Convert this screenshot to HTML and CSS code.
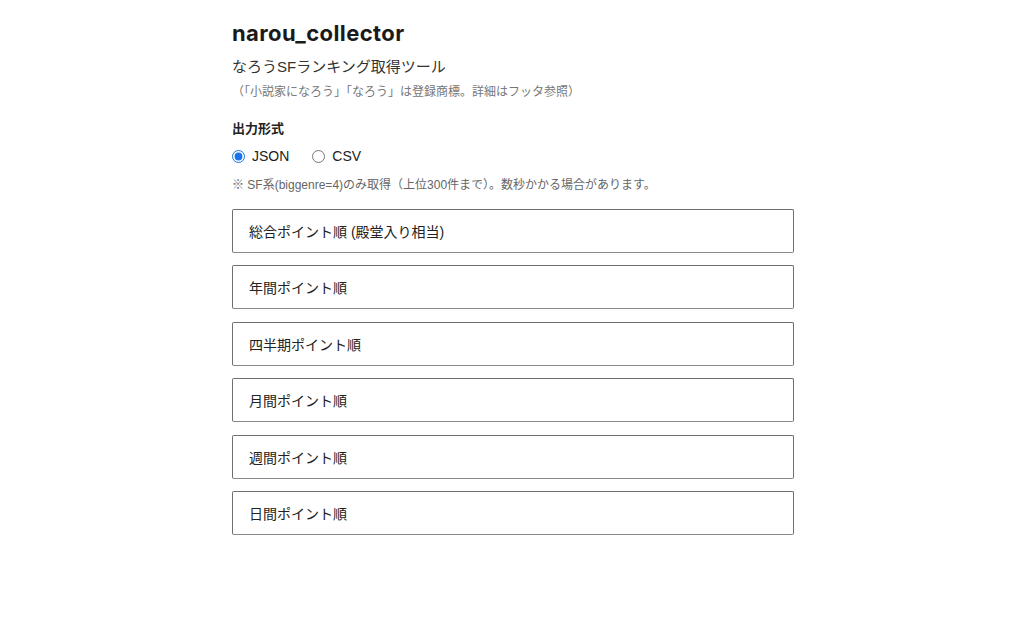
FILE: index.html
```html
<!DOCTYPE html>
<html lang="ja">
<head>
<meta charset="utf-8">
<title>narou_collector</title>
<link rel="stylesheet" href="styles.css">
</head>
<body>
<main class="container">
  <h1 class="title">narou_collector</h1>
  <p class="subtitle">なろうSFランキング取得ツール</p>
  <p class="trademark">（「小説家になろう」「なろう」は登録商標。詳細はフッタ参照）</p>

  <section class="format">
    <div class="format-label">出力形式</div>
    <div class="radios">
      <label class="radio"><input type="radio" name="fmt" checked> JSON</label>
      <label class="radio"><input type="radio" name="fmt"> CSV</label>
    </div>
  </section>

  <p class="note">※ SF系(biggenre=4)のみ取得（上位300件まで）。数秒かかる場合があります。</p>

  <div class="buttons">
    <button class="rank-btn">総合ポイント順 (殿堂入り相当)</button>
    <button class="rank-btn">年間ポイント順</button>
    <button class="rank-btn">四半期ポイント順</button>
    <button class="rank-btn">月間ポイント順</button>
    <button class="rank-btn">週間ポイント順</button>
    <button class="rank-btn">日間ポイント順</button>
  </div>
</main>
</body>
</html>
```

FILE: styles.css
```css
html, body {
  margin: 0;
  padding: 0;
  background: #ffffff;
}
body {
  font-family: "Liberation Sans", "Noto Sans CJK JP", sans-serif;
  color: #1f1f1f;
}
.container {
  width: 562px;
  margin: 0 auto;
  padding-top: 19px;
  padding-left: 2px;
  display: flex;
  flex-direction: column;
}
.title {
  margin: 0;
  font-family: Inter, "Liberation Sans", sans-serif;
  font-size: 22px;
  font-weight: 700;
  letter-spacing: 0.4px;
  line-height: 28px;
  color: #1a1a1a;
}
.subtitle {
  margin: 10px 0 0;
  font-size: 15px;
  line-height: 20px;
  color: #333;
}
.trademark {
  margin: 7px 0 0;
  font-size: 12px;
  line-height: 16px;
  color: #777;
}
.format {
  margin-top: 20px;
}
.format-label {
  font-size: 13px;
  font-weight: 700;
  line-height: 18px;
  color: #222;
}
.radios {
  display: flex;
  gap: 23px;
  margin-top: 9px;
}
.radio {
  display: flex;
  align-items: center;
  gap: 7px;
  font-size: 14px;
  line-height: 18px;
  color: #222;
}
.radio input {
  margin: 0;
  width: 13px;
  height: 13px;
  accent-color: #1a73e8;
}
.note {
  margin: 12px 0 0;
  font-size: 12px;
  line-height: 16px;
  color: #666;
}
.buttons {
  margin-top: 16px;
  display: flex;
  flex-direction: column;
  gap: 12.4px;
}
.rank-btn {
  height: 44px;
  width: 100%;
  text-align: left;
  padding: 0 16px;
  background: #fff;
  border: 1px solid #6f6f6f;
  border-bottom-color: #8a8a8a;
  border-radius: 2px;
  font-family: "Liberation Sans", "Noto Sans CJK JP", sans-serif;
  font-size: 14px;
  color: #222;
  cursor: pointer;
}
```
